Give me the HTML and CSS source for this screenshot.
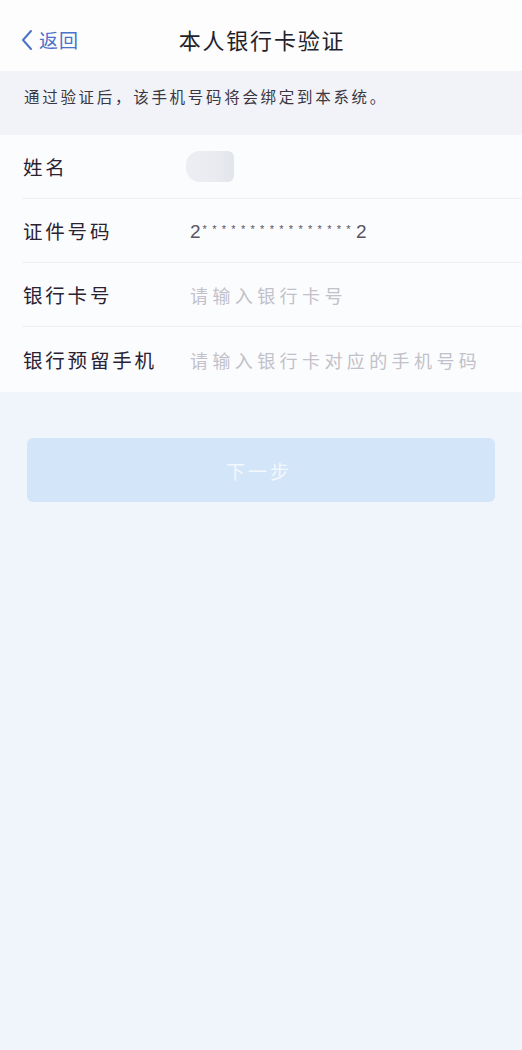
FILE: index.html
```html
<!DOCTYPE html>
<html lang="zh">
<head>
<meta charset="utf-8">
<title>本人银行卡验证</title>
<link rel="stylesheet" href="styles.css">
</head>
<body>
<div class="page">
  <header class="nav">
    <div class="back">
      <svg class="chev" width="12" height="22" viewBox="0 0 12 22"><path d="M10 2 L2 11 L10 20" fill="none" stroke="#4a72c8" stroke-width="2" stroke-linecap="round" stroke-linejoin="round"/></svg>
      <span class="back-text">返回</span>
    </div>
    <div class="title">本人银行卡验证</div>
  </header>
  <div class="notice">通过验证后，该手机号码将会绑定到本系统。</div>
  <div class="form">
    <div class="row">
      <div class="label">姓名</div>
      <div class="value"><span class="blur-name"></span></div>
    </div>
    <div class="row">
      <div class="label">证件号码</div>
      <div class="value id">2<span class="stars">****************</span>2</div>
    </div>
    <div class="row">
      <div class="label">银行卡号</div>
      <div class="value placeholder">请输入银行卡号</div>
    </div>
    <div class="row last">
      <div class="label">银行预留手机</div>
      <div class="value placeholder">请输入银行卡对应的手机号码</div>
    </div>
  </div>
  <div class="actions">
    <div class="btn">下一步</div>
  </div>
</div>
</body>
</html>
```
FILE: styles.css
```css
html, body {
  margin: 0;
  padding: 0;
  background: #f0f4fb;
}
body {
  font-family: "Noto Sans CJK SC", "Noto Sans", sans-serif;
  color: #2a2233;
}
.page {
  width: 522px;
  min-height: 1050px;
  background: #f0f4fb;
}
.nav {
  height: 71px;
  background: #fdfdfe;
  display: flex;
  align-items: center;
  justify-content: center;
  position: relative;
}
.back {
  position: absolute;
  left: 21px;
  top: 26px;
  display: flex;
  align-items: center;
  gap: 6px;
}
.chev {
  display: block;
}
.back-text {
  font-size: 19px;
  color: #4a72c8;
  line-height: 28px;
  letter-spacing: 1px;
}
.title {
  font-size: 22px;
  letter-spacing: 1.8px;
  color: #231f2b;
  line-height: 28px;
  padding-top: 6px;
  padding-left: 2px;
}
.notice {
  height: 64px;
  box-sizing: border-box;
  background: #f1f3f8;
  padding: 13px 0 0 24px;
  font-size: 15.5px;
  letter-spacing: 2.7px;
  color: #3a3642;
  line-height: 24px;
}
.form {
  background: #fbfcfe;
  padding-left: 22px;
}
.row {
  height: 64px;
  display: flex;
  align-items: center;
  border-bottom: 1px solid #eef0f5;
  box-sizing: border-box;
}
.row.last {
  border-bottom: none;
  height: 65px;
}
.label {
  width: 167px;
  padding-left: 1px;
  font-size: 19.5px;
  letter-spacing: 2.8px;
  color: #2a2233;
  line-height: 28px;
}
.value {
  font-size: 18px;
  line-height: 28px;
}
.blur-name {
  display: block;
  width: 48px;
  height: 31px;
  margin-left: -4px;
  border-radius: 14px 6px 6px 14px;
  background: linear-gradient(90deg, #eceef3 0%, #e9ebf0 60%, #e2e5ea 100%);
}
.id {
  font-family: "Liberation Sans", sans-serif;
  color: #5a5462;
  font-size: 19px;
}
.stars {
  font-size: 11px;
  letter-spacing: 5.3px;
  vertical-align: 5px;
  color: #5a5462;
  padding-left: 2px;
}
.placeholder {
  color: #c2c1c9;
  font-size: 18px;
  letter-spacing: 4.4px;
}
.actions {
  padding: 46px 27px 0 27px;
}
.btn {
  height: 64px;
  border-radius: 6px;
  background: #d3e5f9;
  color: #f3f8fe;
  font-size: 19px;
  display: flex;
  align-items: center;
  justify-content: center;
  letter-spacing: 3px;
  padding-right: 4px;
}
```
